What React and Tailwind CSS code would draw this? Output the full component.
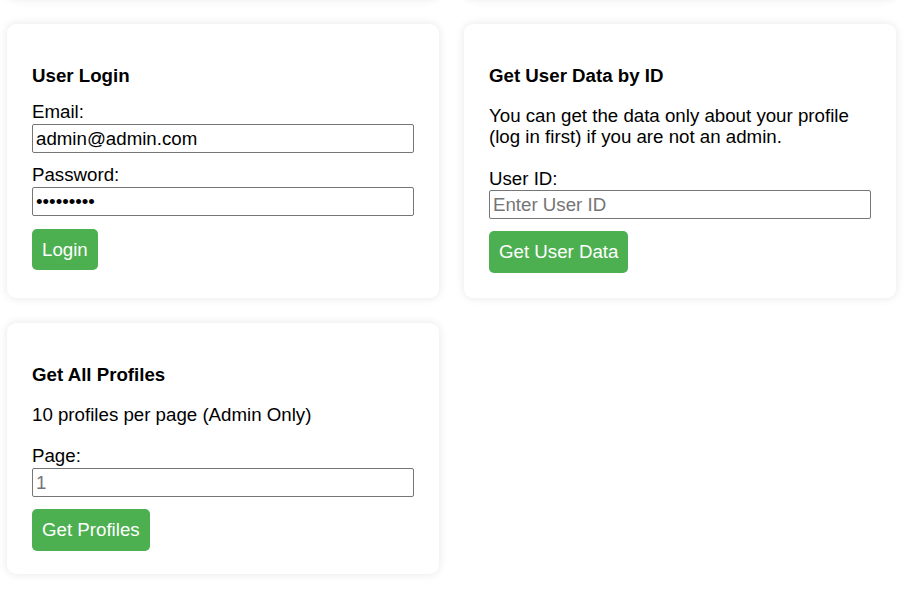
import React from 'react';

const Card = ({ children, pb = 'pb-[25px]' }) => (
    <div className={`bg-white rounded-[9px] shadow-[0_0_10px_rgba(0,0,0,0.1)] px-[25px] pt-[41px] ${pb}`}>
        {children}
    </div>
);

const Field = ({ label, type = 'text', value, placeholder, className = '' }) => (
    <div className={className}>
        <label className="block leading-[21.2px]">{label}</label>
        <input
            type={type}
            defaultValue={value}
            placeholder={placeholder}
            className="block w-full h-[29px] mt-[2px] px-[3px] py-0 border border-[#767676] rounded-[2px] text-[18.7px] leading-[21.2px] text-black placeholder:text-[#757575] outline-none"
        />
    </div>
);

const GreenButton = ({ children, className = '' }) => (
    <button className={`bg-[#4caf50] text-white rounded-[5px] px-[10px] py-[10px] leading-[21.2px] text-[18.7px] ${className}`}>
        {children}
    </button>
);

export default function App() {
    return (
        <div className="min-h-screen bg-white text-black text-[18.7px] leading-[21.2px] font-['Liberation_Sans',Arial,sans-serif] overflow-hidden">
            <div className="grid grid-cols-[432px_432px] gap-x-[25px] gap-y-[25.5px] pl-[7px] -mt-[41.5px]">
                {/* previous row, scrolled out of view */}
                <div className="bg-white rounded-[9px] shadow-[0_0_10px_rgba(0,0,0,0.1)] h-[40px]" />
                <div className="bg-white rounded-[9px] shadow-[0_0_10px_rgba(0,0,0,0.1)] h-[40px]" />

                {/* User Login */}
                <Card>
                    <h3 className="font-bold leading-[21px] mb-[15px]">User Login</h3>
                    <Field label="Email:" value="admin@admin.com" className="mb-[11px]" />
                    <Field label="Password:" type="password" value="123456789" />
                    <GreenButton className="mt-[12.5px]">Login</GreenButton>
                </Card>

                {/* Get User Data */}
                <Card>
                    <h3 className="font-bold leading-[21px]">Get User Data by ID</h3>
                    <p className="mt-[18.5px] mb-[21px] leading-[21.3px]">
                        You can get the data only about your profile (log in first) if you are not an admin.
                    </p>
                    <div>
                        <label className="block leading-[21.2px]">User ID:</label>
                        <input
                            type="text"
                            placeholder="Enter User ID"
                            className="block w-full h-[28.5px] mt-[1px] px-[3px] py-0 border border-[#767676] rounded-[2px] text-[18.7px] leading-[21.2px] text-black placeholder:text-[#757575] outline-none"
                        />
                    </div>
                    <GreenButton className="mt-[12.5px]">Get User Data</GreenButton>
                </Card>

                {/* Get All Profiles */}
                <Card pb="pb-[23.5px]">
                    <h3 className="font-bold leading-[21px]">Get All Profiles</h3>
                    <p className="mt-[19px] mb-[20px]">10 profiles per page (Admin Only)</p>
                    <Field label="Page:" placeholder="1" />
                    <GreenButton className="mt-[12px]">Get Profiles</GreenButton>
                </Card>
            </div>
        </div>
    );
}
